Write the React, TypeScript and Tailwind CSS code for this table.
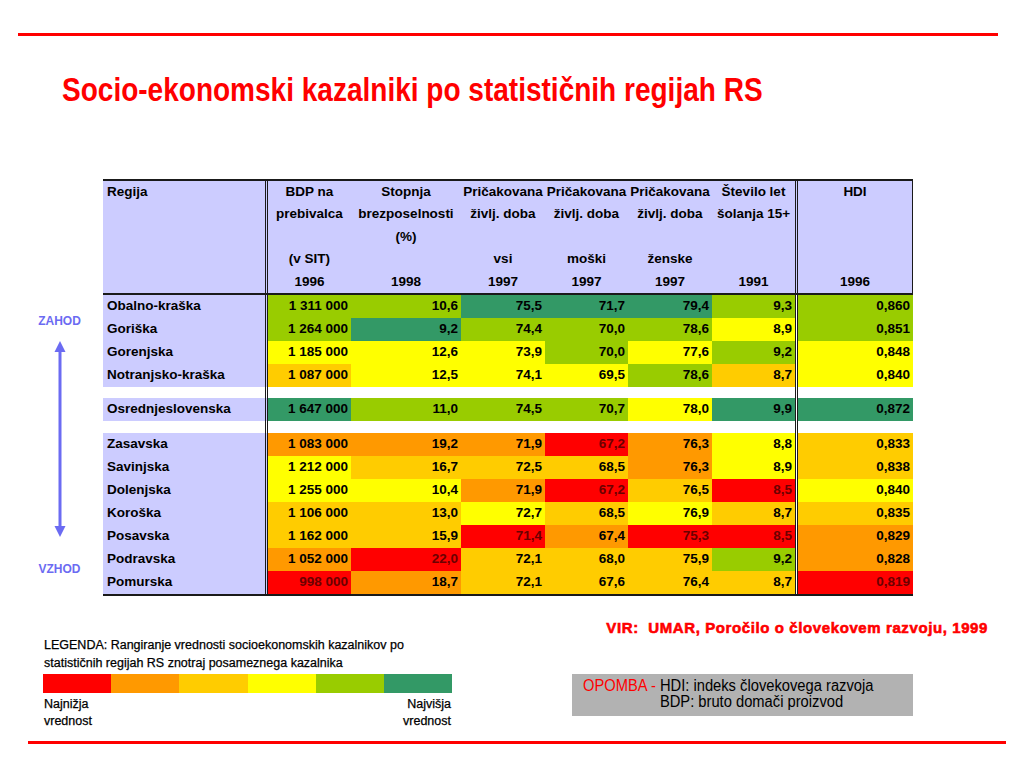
import React from "react";

type Tone = "R" | "O" | "L" | "Y" | "G" | "D";

const toneBg: Record<Tone, string> = {
  R: "bg-[#ff0000] text-[#6b0000]",
  O: "bg-[#ff9900] text-black",
  L: "bg-[#ffcc00] text-black",
  Y: "bg-[#ffff00] text-black",
  G: "bg-[#99cc00] text-black",
  D: "bg-[#339966] text-black",
};

// column widths after the Regija column (BDP .. HDI)
const colW = ["w-[83px]", "w-[110px]", "w-[84px]", "w-[83px]", "w-[84px]", "w-[86px]", "w-[115px]"];
const dbl = "border-r-[3px] border-double border-[#1a1a1a]";

const head = [
  ["BDP na", "prebivalca", "", "(v SIT)", "1996"],
  ["Stopnja", "brezposelnosti", "(%)", "", "1998"],
  ["Pričakovana", "življ. doba", "", "vsi", "1997"],
  ["Pričakovana", "življ. doba", "", "moški", "1997"],
  ["Pričakovana", "življ. doba", "", "ženske", "1997"],
  ["Število let", "šolanja 15+", "", "", "1991"],
  ["HDI", "", "", "", "1996"],
];

type Row = { name: string; cells: [string, Tone][] } | { gap: number };

const rows: Row[] = [
  { name: "Obalno-kraška", cells: [["1 311 000", "G"], ["10,6", "G"], ["75,5", "D"], ["71,7", "D"], ["79,4", "D"], ["9,3", "G"], ["0,860", "G"]] },
  { name: "Goriška", cells: [["1 264 000", "G"], ["9,2", "D"], ["74,4", "G"], ["70,0", "G"], ["78,6", "G"], ["8,9", "Y"], ["0,851", "G"]] },
  { name: "Gorenjska", cells: [["1 185 000", "Y"], ["12,6", "Y"], ["73,9", "Y"], ["70,0", "G"], ["77,6", "Y"], ["9,2", "G"], ["0,848", "Y"]] },
  { name: "Notranjsko-kraška", cells: [["1 087 000", "L"], ["12,5", "Y"], ["74,1", "Y"], ["69,5", "Y"], ["78,6", "G"], ["8,7", "L"], ["0,840", "Y"]] },
  { gap: 11 },
  { name: "Osrednjeslovenska", cells: [["1 647 000", "D"], ["11,0", "G"], ["74,5", "G"], ["70,7", "G"], ["78,0", "Y"], ["9,9", "D"], ["0,872", "D"]] },
  { gap: 12 },
  { name: "Zasavska", cells: [["1 083 000", "O"], ["19,2", "O"], ["71,9", "O"], ["67,2", "R"], ["76,3", "O"], ["8,8", "Y"], ["0,833", "L"]] },
  { name: "Savinjska", cells: [["1 212 000", "Y"], ["16,7", "L"], ["72,5", "L"], ["68,5", "L"], ["76,3", "O"], ["8,9", "Y"], ["0,838", "L"]] },
  { name: "Dolenjska", cells: [["1 255 000", "Y"], ["10,4", "Y"], ["71,9", "O"], ["67,2", "R"], ["76,5", "L"], ["8,5", "R"], ["0,840", "Y"]] },
  { name: "Koroška", cells: [["1 106 000", "L"], ["13,0", "L"], ["72,7", "Y"], ["68,5", "L"], ["76,9", "Y"], ["8,7", "L"], ["0,835", "L"]] },
  { name: "Posavska", cells: [["1 162 000", "L"], ["15,9", "L"], ["71,4", "R"], ["67,4", "O"], ["75,3", "R"], ["8,5", "R"], ["0,829", "O"]] },
  { name: "Podravska", cells: [["1 052 000", "O"], ["22,0", "R"], ["72,1", "L"], ["68,0", "L"], ["75,9", "L"], ["9,2", "G"], ["0,828", "O"]] },
  { name: "Pomurska", cells: [["998 000", "R"], ["18,7", "O"], ["72,1", "L"], ["67,6", "L"], ["76,4", "L"], ["8,7", "L"], ["0,819", "R"]] },
];

const legend = ["bg-[#ff0000]", "bg-[#ff9900]", "bg-[#ffcc00]", "bg-[#ffff00]", "bg-[#99cc00]", "bg-[#339966]"];

const Arrow = () => (
  <svg width="14" height="196" viewBox="0 0 14 196" className="mt-[14px]">
    <line x1="7" y1="8" x2="7" y2="188" stroke="#6b6bf2" strokeWidth="3" />
    <polygon points="7,0 1.5,11 12.5,11" fill="#6b6bf2" />
    <polygon points="7,196 1.5,185 12.5,185" fill="#6b6bf2" />
  </svg>
);

export default function App() {
  return (
    <div className="w-[1024px] h-[768px] bg-white flex flex-col overflow-hidden font-['Liberation_Sans',Arial,sans-serif]">
      <div className="mt-[33px] ml-[18px] w-[980px] h-[3px] bg-[#ff0000]" />

      {/* narrow bold title: no narrow face installed, so squeeze horizontally */}
      <h1 className="mt-[33px] ml-[62px] text-[34px] leading-[40px] font-bold text-[#ff0000] whitespace-nowrap origin-left scale-x-[0.824]">
        Socio-ekonomski kazalniki po statističnih regijah RS
      </h1>

      <div className="mt-[70px] flex">
        {/* west / east indicator */}
        <div className="w-[103px] flex flex-col items-center pl-[16px] pt-[136px] text-[12px] leading-[12px] font-bold text-[#6b6bf2]">
          <div>ZAHOD</div>
          <Arrow />
          <div className="mt-[26px]">VZHOD</div>
        </div>

        {/* table */}
        <div className="w-[810px] text-[13.5px] font-bold text-black">
          <div className="flex border-y-2 border-[#1a1a1a] bg-[#ccccff] h-[116px]">
            <div className={`w-[165px] pl-[4px] leading-[22.4px] ${dbl}`}>Regija</div>
            {head.map((lines, i) => (
              <div
                key={i}
                className={`${colW[i]} flex flex-col items-center leading-[22.4px] ${i === 5 ? dbl : ""} ${i === 6 ? "border-r border-[#1a1a1a]" : ""}`}
              >
                {lines.map((t, j) => (
                  <div key={j} className="h-[22.4px] whitespace-nowrap">{t}</div>
                ))}
              </div>
            ))}
          </div>

          <div className="border-b-2 border-[#1a1a1a]">
            {rows.map((r, idx) =>
              "gap" in r ? (
                <div key={idx} className="flex" style={{ height: r.gap }}>
                  <div className={`w-[165px] ${dbl}`} />
                  {colW.map((w, i) => (
                    <div key={i} className={`${w} ${i === 5 ? dbl : ""}`} />
                  ))}
                </div>
              ) : (
                <div key={idx} className="flex h-[23px]">
                  <div className={`w-[165px] pl-[4px] flex items-center bg-[#ccccff] ${dbl}`}>{r.name}</div>
                  {r.cells.map(([v, t], i) => (
                    <div key={i} className={`${colW[i]} ${i === 5 ? dbl : ""}`}>
                      <div className={`h-full flex items-center justify-end pr-[3px] ${toneBg[t]}`}>{v}</div>
                    </div>
                  ))}
                </div>
              )
            )}
          </div>
        </div>
      </div>

      <div className="mt-[24px] pr-[36px] flex justify-end">
        <div className="text-[15px] leading-[16px] font-bold text-[#ff0000] tracking-[0.6px] [-webkit-text-stroke:0.6px_#ff0000] whitespace-pre">
          VIR:  UMAR, Poročilo o človekovem razvoju, 1999
        </div>
      </div>

      <div className="flex">
        <div className="ml-[43px] w-[409px] text-[12.5px] text-black [-webkit-text-stroke:0.25px_#000]">
          <div className="leading-[18px] pl-[1px]">
            LEGENDA: Rangiranje vrednosti socioekonomskih kazalnikov po
            <br />
            statističnih regijah RS znotraj posameznega kazalnika
          </div>
          <div className="flex h-[19px] mt-[2px]">
            {legend.map((c, i) => (
              <div key={i} className={`flex-1 ${c}`} />
            ))}
          </div>
          <div className="mt-[3px] flex justify-between leading-[17px] px-[1px]">
            <div>
              Najnižja
              <br />
              vrednost
            </div>
            <div className="text-right">
              Najvišja
              <br />
              vrednost
            </div>
          </div>
        </div>

        <div className="ml-[120px] mt-[38px] w-[341px] h-[42px] bg-[#b2b2b2] pl-[11px] pt-[4px] text-[16px] leading-[16px] text-black">
          <div className="flex whitespace-nowrap origin-left scale-x-[0.92]">
            <span className="text-[#ff0000] whitespace-pre">OPOMBA - </span>
            <div>
              <div>HDI: indeks človekovega razvoja</div>
              <div>BDP: bruto domači proizvod</div>
            </div>
          </div>
        </div>
      </div>

      <div className="mt-[11px] ml-[28px] w-[978px] h-[3px] bg-[#ff0000]" />
    </div>
  );
}
